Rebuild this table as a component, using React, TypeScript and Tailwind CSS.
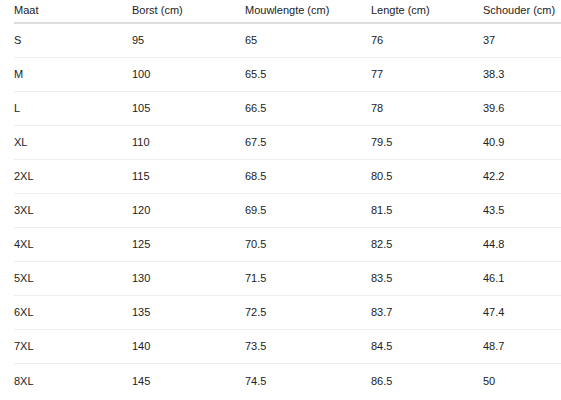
const headers = ["Maat", "Borst (cm)", "Mouwlengte (cm)", "Lengte (cm)", "Schouder (cm)"];

const rows = [
  ["S", "95", "65", "76", "37"],
  ["M", "100", "65.5", "77", "38.3"],
  ["L", "105", "66.5", "78", "39.6"],
  ["XL", "110", "67.5", "79.5", "40.9"],
  ["2XL", "115", "68.5", "80.5", "42.2"],
  ["3XL", "120", "69.5", "81.5", "43.5"],
  ["4XL", "125", "70.5", "82.5", "44.8"],
  ["5XL", "130", "71.5", "83.5", "46.1"],
  ["6XL", "135", "72.5", "83.7", "47.4"],
  ["7XL", "140", "73.5", "84.5", "48.7"],
  ["8XL", "145", "74.5", "86.5", "50"],
];

const cols = "grid grid-cols-[118px_113px_126px_112px_1fr]";

export default function App() {
  return (
    <div className="min-h-[400px] bg-white pl-[14px] text-[11px] text-[#222] font-['Liberation_Sans',Arial,sans-serif]">
      <div className={`${cols} h-[24px] items-center border-b-2 border-[#dddddd] pb-[2px]`}>
        {headers.map((h) => (
          <div key={h}>{h}</div>
        ))}
      </div>
      {rows.map((r, i) => (
        <div
          key={r[0]}
          className={`${cols} h-[34px] items-center ${i < rows.length - 1 ? "border-b border-[#eeeeee]" : ""}`}
        >
          {r.map((c, j) => (
            <div key={j}>{c}</div>
          ))}
        </div>
      ))}
    </div>
  );
}
